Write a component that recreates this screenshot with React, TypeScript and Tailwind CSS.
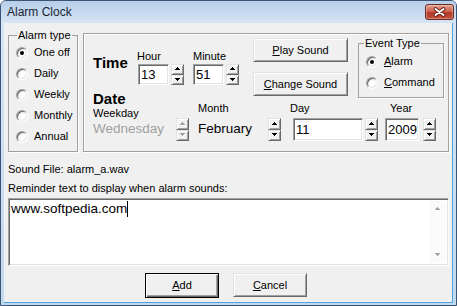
import type { ReactNode } from 'react'

/* classic 3D edges */
const raised =
  'border border-t-[#e3e3e3] border-l-[#e3e3e3] border-r-[#696969] border-b-[#696969] shadow-[inset_1px_1px_0_#fff,inset_-1px_-1px_0_#a0a0a0]'
const sunken =
  'border border-t-[#a0a0a0] border-l-[#a0a0a0] border-r-white border-b-white shadow-[inset_1px_1px_0_#696969,inset_-1px_-1px_0_#e3e3e3]'

/* ── Arrow glyph ─────────────────────────────────────────────── */
function Arrow({ up, disabled }: { up?: boolean; disabled?: boolean }) {
  const rows = up ? [0, 1, 2] : [2, 1, 0]
  const fill = disabled ? '#a0a0a0' : '#000'
  return (
    <svg width="6" height="4" viewBox="0 0 6 4" shapeRendering="crispEdges">
      {disabled &&
        rows.map((r, i) => (
          <rect key={'s' + i} x={3 - r} y={i + 1} width={r * 2 + 1} height={1} fill="#fff" />
        ))}
      {rows.map((r, i) => (
        <rect key={i} x={2 - r} y={i} width={r * 2 + 1} height={1} fill={fill} />
      ))}
    </svg>
  )
}

/* ── Up/down control ─────────────────────────────────────────── */
function Spin({ tall, disabled }: { tall?: boolean; disabled?: boolean }) {
  return (
    <div className={`flex flex-col w-[13px] flex-shrink-0 ${tall ? 'h-[23px]' : 'h-[21px]'}`}>
      <div className={`flex-1 flex items-center justify-center bg-[#f0f0f0] ${raised}`}>
        <Arrow up disabled={disabled} />
      </div>
      <div className={`flex-1 flex items-center justify-center bg-[#f0f0f0] ${raised}`}>
        <Arrow disabled={disabled} />
      </div>
    </div>
  )
}

function Radio({ checked, label }: { checked?: boolean; label: ReactNode }) {
  return (
    <div className="h-[21px] flex items-center pl-[7px]">
      <span
        className={`w-[12px] h-[12px] rounded-full flex items-center justify-center flex-shrink-0
          bg-[radial-gradient(circle_at_65%_65%,#fff_30%,#dcdcdc)] ${sunken}`}
      >
        {checked && <span className="w-[4px] h-[4px] rounded-full bg-black" />}
      </span>
      <span className="ml-[6px] text-[11px] leading-[13px]">{label}</span>
    </div>
  )
}

function Btn({ children, w, def }: { children: ReactNode; w: string; def?: boolean }) {
  return (
    <div
      className={`${w} flex items-center justify-center bg-[#f0f0f0] text-[11px] ${
        def
          ? 'h-[25px] border border-black shadow-[inset_1px_1px_0_#fff,inset_-1px_-1px_0_#696969,inset_-2px_-2px_0_#a0a0a0]'
          : 'h-[24px] ' + raised
      }`}
    >
      {children}
    </div>
  )
}

const U = ({ children }: { children: ReactNode }) => <span className="underline underline-offset-1">{children}</span>

export default function App() {
  return (
    <div className="w-[457px] h-[306px] flex flex-col bg-[#b9d1ea] border border-[#3b5577] rounded-t-[6px] overflow-hidden font-['Liberation_Sans',Arial,sans-serif] text-black">
      {/* ── Title bar ─────────────────────────────── */}
      <div className="h-[22px] flex-shrink-0 flex items-start justify-between pl-[6px] pr-[2px] bg-[linear-gradient(#b6cee9,#d6e5f5)]">
        <span className="mt-[4px] text-[12px] leading-[15px] text-[#1b2433]">Alarm Clock</span>
        <div className="mt-[3px] w-[29px] h-[16px] rounded-[3px] border border-[#6b2a22] flex items-center justify-center bg-[linear-gradient(#e3a293,#cc5a47_50%,#b0382a_55%,#c2523d)] shadow-[inset_0_0_0_1px_rgba(255,255,255,0.3)]">
          <svg width="13" height="10" viewBox="0 0 13 10">
            <path d="M2.5 2 L10.5 8 M10.5 2 L2.5 8" stroke="#5a1c14" strokeWidth="3.6" strokeLinecap="round" />
            <path d="M2.5 2 L10.5 8 M10.5 2 L2.5 8" stroke="#fff" strokeWidth="2" strokeLinecap="round" />
          </svg>
        </div>
      </div>

      {/* ── Frame + client ────────────────────────── */}
      <div className="flex-1 flex pl-[3px] pr-[3px] pb-[2px] bg-[linear-gradient(#d6e5f5,#c2d8ef)]">
        <div className="flex-1 flex flex-col bg-[#f0f0f0] border-r border-b border-[#4aa6dc]">
          {/* top row */}
          <div className="flex items-start pt-[6px] pl-[4px]">
            {/* Alarm type */}
            <fieldset className="w-[70px] h-[123px] border border-[#a0a0a0] shadow-[1px_1px_0_#fff]">
              <legend className="ml-[8px] px-[1px] text-[11px] leading-[13px]">Alarm type</legend>
              <Radio checked label="One off" />
              <Radio label="Daily" />
              <Radio label="Weekly" />
              <Radio label="Monthly" />
              <Radio label="Annual" />
            </fieldset>

            {/* Time / date box */}
            <div className="ml-[5px] mt-[4px] w-[366px] h-[119px] flex flex-col border border-[#a0a0a0] shadow-[1px_1px_0_#fff,inset_1px_1px_0_#fff]">
              <div className="h-[57px] flex items-start">
                <span className="ml-[9px] mt-[20px] w-[44px] text-[15px] font-bold leading-[17px]">Time</span>
                <div className="mt-[16px] flex flex-col">
                  <span className="text-[11px] leading-[13px]">Hour</span>
                  <div className="mt-[1px] flex">
                    <div className={`ml-[1px] w-[31px] h-[21px] bg-white flex items-center pl-[2px] text-[13px] ${sunken}`}>13</div>
                    <div className="ml-[2px]"><Spin /></div>
                  </div>
                </div>
                <div className="ml-[9px] mt-[16px] flex flex-col">
                  <span className="text-[11px] leading-[13px]">Minute</span>
                  <div className="mt-[1px] flex">
                    <div className={`w-[31px] h-[21px] bg-white flex items-center pl-[2px] text-[13px] ${sunken}`}>51</div>
                    <div className="ml-[2px]"><Spin /></div>
                  </div>
                </div>
                <div className="ml-[14px] mt-[4px] flex flex-col">
                  <Btn w="w-[95px]"><span><U>P</U>lay Sound</span></Btn>
                  <div className="mt-[10px]">
                    <Btn w="w-[95px]"><span><U>C</U>hange Sound</span></Btn>
                  </div>
                </div>
                <fieldset className="ml-[10px] mt-[3px] w-[86px] h-[61px] border border-[#a0a0a0] shadow-[1px_1px_0_#fff]">
                  <legend className="ml-[5px] px-[1px] text-[11px] leading-[13px]">Event Type</legend>
                  <div className="mt-[1px]">
                    <Radio checked label={<><U>A</U>larm</>} />
                    <Radio label={<><U>C</U>ommand</>} />
                  </div>
                </fieldset>
              </div>

              <div className="flex items-end">
                <div className="ml-[9px] flex flex-col">
                  <span className="text-[15px] font-bold leading-[15px]">Date</span>
                  <span className="mt-[2px] text-[11px] leading-[10px]">Weekday</span>
                  <div className="flex items-center h-[23px]">
                    <span className="w-[83px] text-[13.5px] text-[#a0a0a0]">Wednesday</span>
                    <Spin tall disabled />
                  </div>
                </div>
                <div className="ml-[9px] flex flex-col">
                  <span className="text-[11px] leading-[11px]">Month</span>
                  <div className="mt-[4px] flex items-center h-[23px]">
                    <span className="w-[70px] text-[13.5px]">February</span>
                    <Spin tall />
                  </div>
                </div>
                <div className="ml-[9px] flex flex-col">
                  <span className="text-[11px] leading-[11px]">Day</span>
                  <div className="mt-[4px] ml-[3px] flex">
                    <div className={`w-[70px] h-[23px] bg-white flex items-center pl-[2px] text-[13px] ${sunken}`}>11</div>
                    <div className="ml-[2px]"><Spin tall /></div>
                  </div>
                </div>
                <div className="ml-[7px] flex flex-col">
                  <span className="ml-[5px] text-[11px] leading-[11px]">Year</span>
                  <div className="mt-[4px] flex">
                    <div className={`w-[34px] h-[23px] bg-white flex items-center pl-[2px] text-[13px] ${sunken}`}>2009</div>
                    <div className="ml-[4px]"><Spin tall /></div>
                  </div>
                </div>
              </div>
            </div>
          </div>

          <span className="mt-[11px] ml-[4px] text-[11px] leading-[13px]">Sound File: alarm_a.wav</span>
          <span className="mt-[6px] ml-[4px] text-[11px] leading-[13px]">Reminder text to display when alarm sounds:</span>

          {/* reminder text */}
          <div className={`mt-[3px] ml-[4px] w-[441px] h-[68px] flex bg-white ${sunken}`}>
            <div className="flex-1 pl-[2px] pt-[2px] flex items-start">
              <span className="text-[13.5px] leading-[16px]">www.softpedia.com</span>
              <span className="w-[1px] h-[16px] bg-black" />
            </div>
            <div className="w-[17px] my-[2px] mr-[2px] flex flex-col items-center justify-between bg-[#fafafa] py-[6px]">
              <Arrow up disabled />
              <Arrow disabled />
            </div>
          </div>

          <div className="mt-[7px] ml-[141px] flex gap-[14px]">
            <Btn w="w-[74px]" def><span><U>A</U>dd</span></Btn>
            <Btn w="w-[74px]"><span><U>C</U>ancel</span></Btn>
          </div>
        </div>
      </div>
    </div>
  )
}
